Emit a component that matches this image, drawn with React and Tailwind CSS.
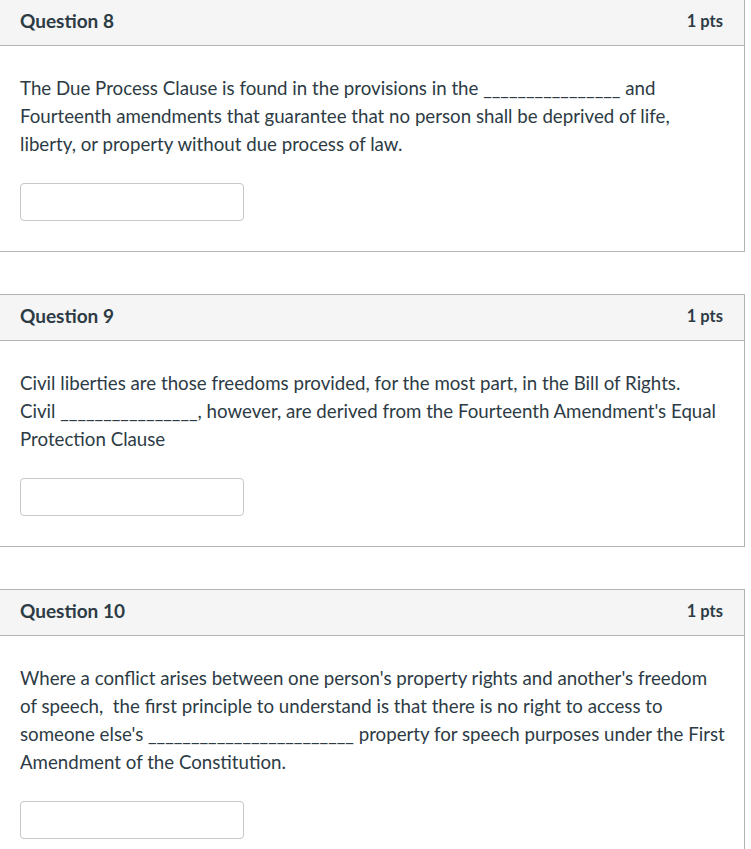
import React from "react";

const questions = [
  {
    id: 8,
    lines: (
      <>
        The Due Process Clause is found in the provisions in the ________________ and
        <br />
        Fourteenth amendments that guarantee that no person shall be deprived of life,
        <br />
        liberty, or property without due process of law.
      </>
    ),
  },
  {
    id: 9,
    lines: (
      <>
        Civil liberties are those freedoms provided, for the most part, in the Bill of Rights.
        <br />
        Civil ________________, however, are derived from the Fourteenth Amendment's Equal
        <br />
        Protection Clause
      </>
    ),
  },
  {
    id: 10,
    lines: (
      <>
        Where a conflict arises between one person's property rights and another's freedom
        <br />
        of speech,{"\u00a0"} the first principle to understand is that there is no right to access to
        <br />
        someone else's ________________________ property for speech purposes under the First
        <br />
        Amendment of the Constitution.
      </>
    ),
  },
];

const QuestionCard = ({ q, first }) => (
  <div
    className={`w-[745px] border border-l-0 border-[#b4b4b4] bg-white ${first ? "-mt-px" : ""}`}
  >
    {/* header */}
    <div className="h-[46px] flex items-center justify-between pl-5 pr-5 pb-[3px] bg-[#f5f5f5] border-b border-[#b4b4b4]">
      <span className="text-[19px] font-bold text-[#2d3b45]">Question {q.id}</span>
      <span className="text-[16.5px] font-bold text-[#2d3b45] pr-px">1 pts</span>
    </div>
    {/* body */}
    <div className="pl-5 pr-[10px] pt-[28px] pb-[30px]">
      <p className="text-[18.7px] leading-[28px] text-[#2d3b45] whitespace-nowrap">{q.lines}</p>
      <input
        type="text"
        className="mt-[25px] block w-[224px] h-[38px] border border-[#c7c7c7] rounded-[4px] bg-white"
      />
    </div>
  </div>
);

export default function App() {
  return (
    <div
      className="min-h-screen bg-white flex flex-col gap-[42px]"
      style={{ fontFamily: "Lato, 'Liberation Sans', sans-serif" }}
    >
      {questions.map((q, i) => (
        <QuestionCard key={q.id} q={q} first={i === 0} />
      ))}
    </div>
  );
}
